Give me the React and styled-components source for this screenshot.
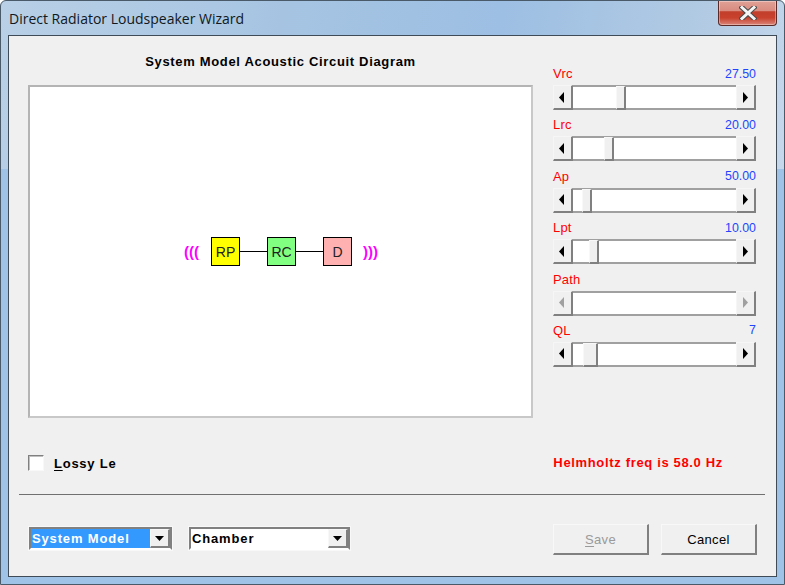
import React from "react";
import styled, { createGlobalStyle } from "styled-components";

const Global = createGlobalStyle`
  html, body { margin: 0; padding: 0; background: #fff; }
  * { box-sizing: border-box; }
`;

const Win = styled.div`
  width: 785px; height: 585px; display: flex; flex-direction: column; overflow: hidden;
  border: 1px solid #4a5a68; border-radius: 6px 6px 0 0;
  background: linear-gradient(100deg, #b9d0e6 0%, #a6c4e2 35%, #9dbfe3 62%, #b3cbe3 88%, #c6d8ec 100%);
  background-size: 100% 168px; background-repeat: no-repeat;
  background-color: #9fc2e7;
`;
const TitleBar = styled.div`
  height: 34px; flex: none; display: flex; justify-content: space-between; align-items: flex-start; padding: 0 7px 0 8px;
`;
const TitleText = styled.div`
  font: 14px "Open Sans", "Liberation Sans", sans-serif; color: #101820; margin-top: 8px; line-height: 19px;
`;
const Close = styled.div`
  width: 59px; height: 25px; border: 1px solid #5a2a28; border-top: none; border-radius: 0 0 4px 4px; display: flex; align-items: center; justify-content: center;
  background: linear-gradient(#e0a096 0%, #d98c80 40%, #c23f2c 45%, #c8412c 70%, #d9857a 100%);
  box-shadow: inset 0 0 0 1px rgba(255,255,255,.35);
`;
const Client = styled.div`
  flex: 1; margin: 0 7px 7px 7px; border: 1px solid #3f4c58; background: #f0f0f0; display: flex; flex-direction: column; padding: 0 19px 0 19px;
`;
const Main = styled.div`
  display: flex; height: 384px; align-items: flex-start;
`;
const Left = styled.div`
  width: 505px; display: flex; flex-direction: column;
`;
const Heading = styled.div`
  height: 49px; padding-top: 17px; text-align: center; font: bold 13px/18px "Liberation Sans", sans-serif; color: #000; letter-spacing: .67px;
`;
const Diagram = styled.div`
  height: 333px; background: #fff; border: 2px solid; border-color: #b4b4b4 #c8c8c8 #c8c8c8 #b4b4b4;
  display: flex; align-items: center; justify-content: center;
`;
const Waves = styled.span`
  font: bold 15px/29px "Liberation Sans", sans-serif; color: #ff00ff; width: 14px; margin: ${p => p.$right ? "0 0 0 11px" : "0 13px 0 0"}; white-space: nowrap;
`;
const Node = styled.div`
  width: 29px; height: 29px; border: 1px solid #000; background: ${p => p.$bg}; display: flex; align-items: center; justify-content: center;
  font: 14px "Liberation Sans", sans-serif; color: #222;
`;
const Wire = styled.div`
  width: 27px; height: 1px; background: #000;
`;
const Controls = styled.div`
  width: 203px; margin-left: 20px; padding-top: 26px; display: flex; flex-direction: column;
`;
const Param = styled.div`
  height: 51.4px; display: flex; flex-direction: column;
`;
const ParamHead = styled.div`
  height: 23px; display: flex; justify-content: space-between; align-items: center; font: 13px "Liberation Sans", sans-serif;
`;
const ParamName = styled.span` color: #ff0000; letter-spacing: .2px; `;
const ParamValue = styled.span` color: #2244ff; font-size: 12.4px; `;
const Scroll = styled.div`
  height: 25px; display: flex;
`;
const Arrow = styled.div`
  width: 20px; flex: none; background: #f0f0f0; display: flex; align-items: center; justify-content: center;
  padding-right: ${p => p.$back ? "3px" : "0"};
  border-style: solid; border-width: 1px 2px 2px 1px; border-color: #f6f6f6 #808080 #808080 #f6f6f6;
`;
const Tri = styled.svg`
  width: 5px; height: 11px; display: block;
`;
const Track = styled.div`
  flex: 1; display: flex; background: #fff; border-top: 2px solid #a0a0a0; border-bottom: 2px solid #a0a0a0;
`;
const Gap = styled.div`
  width: ${p => p.$w}px; flex: none;
`;
const Thumb = styled.div`
  width: ${p => p.$w}px; flex: none; margin: -1px 0 -2px; background: #f0f0f0; border-style: solid; border-width: 1px 2px 2px 1px; border-color: #f8f8f8 #808080 #808080 #f8f8f8;
`;
const Status = styled.div`
  display: flex; height: 74px; padding-top: 35px; justify-content: space-between; align-items: flex-start;
`;
const CheckRow = styled.label`
  display: flex; align-items: center; gap: 10px; height: 16px; font: bold 13px "Liberation Sans", sans-serif; color: #000; letter-spacing: .75px;
`;
const Box = styled.span`
  width: 16px; height: 16px; background: #fff; border-style: solid; border-width: 1px; border-color: #808080 #f8f8f8 #f8f8f8 #808080; box-shadow: inset 1px 1px 0 #c0c0c0;
`;
const Mnemonic = styled.u` text-underline-offset: 2px; `;
const Helm = styled.div`
  font: bold 13px/16px "Liberation Sans", sans-serif; color: #ff0000; letter-spacing: .66px; margin-right: 34px;
`;
const Rule = styled.div`
  height: 1px; margin: 0 -8px 0 -9px; background: #707070; flex: none;
`;
const Footer = styled.div`
  display: flex; padding-top: 29px; align-items: flex-start; justify-content: space-between;
`;
const Combos = styled.div` display: flex; gap: 17px; margin: 3px 0 0 1px; `;
const Combo = styled.div`
  width: ${p => p.$w}px; height: 23px; display: flex; background: #fff; border: 2px solid; border-color: #808080 #808080 #fff #808080;
  box-shadow: 0 0 0 1px #f8f8f8;
  font: bold 13px/19px "Liberation Sans", sans-serif; letter-spacing: .85px;
`;
const ComboText = styled.div`
  flex: 1; padding: 0 0 0 1px; background: ${p => p.$sel ? "#3399ff" : "#fff"}; color: ${p => p.$sel ? "#fff" : "#000"};
  outline: ${p => p.$sel ? "1px dotted #c08020" : "none"}; outline-offset: -1px; white-space: nowrap;
`;
const ComboBtn = styled.div`
  width: 20px; flex: none; background: #f0f0f0; display: flex; align-items: center; justify-content: center; border-style: solid; border-width: 1px 2px 2px 1px; border-color: #f8f8f8 #808080 #808080 #f8f8f8;
`;
const Buttons = styled.div` display: flex; gap: 12px; `;
const Btn = styled.div`
  width: 96px; height: 31px; display: flex; align-items: center; justify-content: center;
  border-style: solid; border-width: 1px 2px 2px 1px; border-color: #f8f8f8 #808080 #808080 #f8f8f8; background: #f0f0f0;
  font: 13px "Liberation Sans", sans-serif; letter-spacing: .3px; color: ${p => p.$off ? "#9a9a9a" : "#000"};
`;

const params = [
  { n: "Vrc", v: "27.50", l: 43, w: 10 },
  { n: "Lrc", v: "20.00", l: 31, w: 10 },
  { n: "Ap", v: "50.00", l: 9, w: 10 },
  { n: "Lpt", v: "10.00", l: 16, w: 10 },
  { n: "Path", v: "", off: true },
  { n: "QL", v: "7", l: 10, w: 15 },
];

const Left3 = ({ c }) => <Tri viewBox="0 0 5 11"><polygon points="5,0 0,5.5 5,11" fill={c} /></Tri>;
const Right3 = ({ c }) => <Tri viewBox="0 0 5 11"><polygon points="0,0 5,5.5 0,11" fill={c} /></Tri>;
const Down = () => <svg width="9" height="5" viewBox="0 0 9 5"><polygon points="0,0 9,0 4.5,5" fill="#000" /></svg>;

export default function App() {
  return (
    <>
      <Global />
      <Win>
        <TitleBar>
          <TitleText>Direct Radiator Loudspeaker Wizard</TitleText>
          <Close>
            <svg width="18" height="14" viewBox="0 0 18 14">
              <path d="M3 1.5 L15 12.5 M15 1.5 L3 12.5" stroke="#4a4a4a" strokeWidth="5" strokeLinecap="square" />
              <path d="M3 1.5 L15 12.5 M15 1.5 L3 12.5" stroke="#f4f4f4" strokeWidth="3" strokeLinecap="square" />
            </svg>
          </Close>
        </TitleBar>
        <Client>
          <Main>
            <Left>
              <Heading>System Model Acoustic Circuit Diagram</Heading>
              <Diagram>
                <Waves>(((</Waves>
                <Node $bg="#ffff00">RP</Node>
                <Wire />
                <Node $bg="#80ff80">RC</Node>
                <Wire />
                <Node $bg="#ffb0b0">D</Node>
                <Waves $right>)))</Waves>
              </Diagram>
            </Left>
            <Controls>
              {params.map(p => (
                <Param key={p.n}>
                  <ParamHead>
                    <ParamName>{p.n}</ParamName>
                    <ParamValue>{p.v}</ParamValue>
                  </ParamHead>
                  <Scroll>
                    <Arrow $back><Left3 c={p.off ? "#a0a0a0" : "#000"} /></Arrow>
                    <Track>
                      {!p.off && <Gap $w={p.l} />}
                      {!p.off && <Thumb $w={p.w} />}
                    </Track>
                    <Arrow><Right3 c={p.off ? "#a0a0a0" : "#000"} /></Arrow>
                  </Scroll>
                </Param>
              ))}
            </Controls>
          </Main>
          <Status>
            <CheckRow><Box /><span><Mnemonic>L</Mnemonic>ossy Le</span></CheckRow>
            <Helm>Helmholtz freq is 58.0 Hz</Helm>
          </Status>
          <Rule />
          <Footer>
            <Combos>
              <Combo $w={143}>
                <ComboText $sel>System Model</ComboText>
                <ComboBtn><Down /></ComboBtn>
              </Combo>
              <Combo $w={161}>
                <ComboText>Chamber</ComboText>
                <ComboBtn><Down /></ComboBtn>
              </Combo>
            </Combos>
            <Buttons>
              <Btn $off><span><Mnemonic>S</Mnemonic>ave</span></Btn>
              <Btn>Cancel</Btn>
            </Buttons>
          </Footer>
        </Client>
      </Win>
    </>
  );
}
